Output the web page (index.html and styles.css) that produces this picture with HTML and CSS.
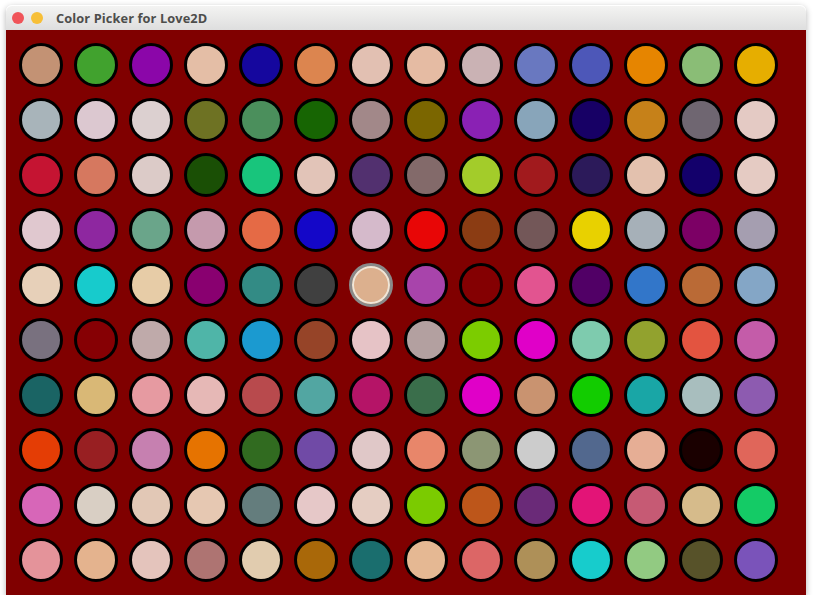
FILE: index.html
```html
<!DOCTYPE html>
<html>
<head>
<meta charset="utf-8">
<title>Color Picker for Love2D</title>
<link rel="stylesheet" href="styles.css">
</head>
<body>
<div class="window">
  <div class="titlebar">
    <span class="btn close"></span>
    <span class="btn min"></span>
    <span class="title">Color Picker for Love2D</span>
  </div>
  <div class="canvas">
    <div class="dot" style="background:#c39274"></div>
    <div class="dot" style="background:#41a22e"></div>
    <div class="dot" style="background:#8b06a9"></div>
    <div class="dot" style="background:#e4bea6"></div>
    <div class="dot" style="background:#15079e"></div>
    <div class="dot" style="background:#dc854f"></div>
    <div class="dot" style="background:#e2c0b2"></div>
    <div class="dot" style="background:#e5bba3"></div>
    <div class="dot" style="background:#cab2b4"></div>
    <div class="dot" style="background:#6978c0"></div>
    <div class="dot" style="background:#4d57b8"></div>
    <div class="dot" style="background:#e68500"></div>
    <div class="dot" style="background:#8abd76"></div>
    <div class="dot" style="background:#e6ae00"></div>

    <div class="dot" style="background:#a8b4ba"></div>
    <div class="dot" style="background:#dcc8d0"></div>
    <div class="dot" style="background:#dcd0d0"></div>
    <div class="dot" style="background:#6e7223"></div>
    <div class="dot" style="background:#4b8f5c"></div>
    <div class="dot" style="background:#176503"></div>
    <div class="dot" style="background:#a28889"></div>
    <div class="dot" style="background:#7b6600"></div>
    <div class="dot" style="background:#8a21b4"></div>
    <div class="dot" style="background:#88a5ba"></div>
    <div class="dot" style="background:#170065"></div>
    <div class="dot" style="background:#c68119"></div>
    <div class="dot" style="background:#6f6671"></div>
    <div class="dot" style="background:#e4cac4"></div>

    <div class="dot" style="background:#c51432"></div>
    <div class="dot" style="background:#d6785f"></div>
    <div class="dot" style="background:#dccbc8"></div>
    <div class="dot" style="background:#1a4f05"></div>
    <div class="dot" style="background:#18c57c"></div>
    <div class="dot" style="background:#e2c4b8"></div>
    <div class="dot" style="background:#52306f"></div>
    <div class="dot" style="background:#836a6a"></div>
    <div class="dot" style="background:#a3cc2a"></div>
    <div class="dot" style="background:#a11a1d"></div>
    <div class="dot" style="background:#2c1a5a"></div>
    <div class="dot" style="background:#e3c1ae"></div>
    <div class="dot" style="background:#13006b"></div>
    <div class="dot" style="background:#e5cbc3"></div>

    <div class="dot" style="background:#e0c8cf"></div>
    <div class="dot" style="background:#8e27a0"></div>
    <div class="dot" style="background:#6aa58a"></div>
    <div class="dot" style="background:#c59aad"></div>
    <div class="dot" style="background:#e56a45"></div>
    <div class="dot" style="background:#1407c8"></div>
    <div class="dot" style="background:#d5bacb"></div>
    <div class="dot" style="background:#e80606"></div>
    <div class="dot" style="background:#8b3c13"></div>
    <div class="dot" style="background:#735758"></div>
    <div class="dot" style="background:#e8d100"></div>
    <div class="dot" style="background:#a6b0b8"></div>
    <div class="dot" style="background:#7c0065"></div>
    <div class="dot" style="background:#a59eb0"></div>

    <div class="dot" style="background:#e7d0b9"></div>
    <div class="dot" style="background:#17cbcc"></div>
    <div class="dot" style="background:#e7cca7"></div>
    <div class="dot" style="background:#890070"></div>
    <div class="dot" style="background:#338b85"></div>
    <div class="dot" style="background:#404040"></div>
    <div class="dot selected" style="background:#dcb08e"></div>
    <div class="dot" style="background:#a844ab"></div>
    <div class="dot" style="background:#840002"></div>
    <div class="dot" style="background:#e25490"></div>
    <div class="dot" style="background:#510066"></div>
    <div class="dot" style="background:#3276c9"></div>
    <div class="dot" style="background:#ba6a36"></div>
    <div class="dot" style="background:#84a6c6"></div>

    <div class="dot" style="background:#79717f"></div>
    <div class="dot" style="background:#860004"></div>
    <div class="dot" style="background:#bfaaaa"></div>
    <div class="dot" style="background:#4fb5a8"></div>
    <div class="dot" style="background:#1b9ad0"></div>
    <div class="dot" style="background:#964428"></div>
    <div class="dot" style="background:#e6c3c6"></div>
    <div class="dot" style="background:#b3a0a0"></div>
    <div class="dot" style="background:#7ccc00"></div>
    <div class="dot" style="background:#e000c8"></div>
    <div class="dot" style="background:#7ecbae"></div>
    <div class="dot" style="background:#92a22e"></div>
    <div class="dot" style="background:#e35440"></div>
    <div class="dot" style="background:#c45ca9"></div>

    <div class="dot" style="background:#1a6464"></div>
    <div class="dot" style="background:#d9b876"></div>
    <div class="dot" style="background:#e69aa1"></div>
    <div class="dot" style="background:#e6b8b6"></div>
    <div class="dot" style="background:#b84a4d"></div>
    <div class="dot" style="background:#52a6a2"></div>
    <div class="dot" style="background:#b51467"></div>
    <div class="dot" style="background:#3a6e4b"></div>
    <div class="dot" style="background:#e000c8"></div>
    <div class="dot" style="background:#c99370"></div>
    <div class="dot" style="background:#12cc00"></div>
    <div class="dot" style="background:#19a6a6"></div>
    <div class="dot" style="background:#a8bebe"></div>
    <div class="dot" style="background:#8d5bb0"></div>

    <div class="dot" style="background:#e43d05"></div>
    <div class="dot" style="background:#981f22"></div>
    <div class="dot" style="background:#c680b0"></div>
    <div class="dot" style="background:#e67300"></div>
    <div class="dot" style="background:#316b20"></div>
    <div class="dot" style="background:#704aa6"></div>
    <div class="dot" style="background:#e0c8c8"></div>
    <div class="dot" style="background:#e8866a"></div>
    <div class="dot" style="background:#8c9674"></div>
    <div class="dot" style="background:#cccccc"></div>
    <div class="dot" style="background:#52688e"></div>
    <div class="dot" style="background:#e6ae95"></div>
    <div class="dot" style="background:#1a0000"></div>
    <div class="dot" style="background:#e0665a"></div>

    <div class="dot" style="background:#d766b8"></div>
    <div class="dot" style="background:#d9cfc4"></div>
    <div class="dot" style="background:#e2c8b6"></div>
    <div class="dot" style="background:#e6c8b2"></div>
    <div class="dot" style="background:#647d7d"></div>
    <div class="dot" style="background:#e6c8c8"></div>
    <div class="dot" style="background:#e5cdc2"></div>
    <div class="dot" style="background:#7bcb00"></div>
    <div class="dot" style="background:#bd561a"></div>
    <div class="dot" style="background:#6a2a78"></div>
    <div class="dot" style="background:#e31477"></div>
    <div class="dot" style="background:#c65a74"></div>
    <div class="dot" style="background:#d6bb8b"></div>
    <div class="dot" style="background:#14cb66"></div>

    <div class="dot" style="background:#e4939a"></div>
    <div class="dot" style="background:#e4b38e"></div>
    <div class="dot" style="background:#e4c4bc"></div>
    <div class="dot" style="background:#ae7472"></div>
    <div class="dot" style="background:#e1ccaf"></div>
    <div class="dot" style="background:#a96809"></div>
    <div class="dot" style="background:#1a6e6e"></div>
    <div class="dot" style="background:#e5b893"></div>
    <div class="dot" style="background:#dc6666"></div>
    <div class="dot" style="background:#ae9058"></div>
    <div class="dot" style="background:#17cccc"></div>
    <div class="dot" style="background:#92ca82"></div>
    <div class="dot" style="background:#575229"></div>
    <div class="dot" style="background:#7a53ba"></div>
  </div>
</div>
</body>
</html>
```

FILE: styles.css
```css
html, body {
  margin: 0;
  padding: 0;
  background: #ffffff;
}

.window {
  width: 800px;
  margin: 5px 0 0 6px;
  border-radius: 6px 6px 0 0;
  box-shadow: 0 2px 6px rgba(0, 0, 0, 0.3);
}

.titlebar {
  height: 25px;
  display: flex;
  align-items: center;
  padding-left: 6px;
  border-radius: 6px 6px 0 0;
  background: linear-gradient(#f4f4f3, #dedede);
  box-shadow: inset 0 1px 0 #ffffff;
}

.btn {
  width: 12px;
  height: 12px;
  border-radius: 50%;
  margin-right: 7px;
  flex: none;
}

.close {
  background: #f05459;
}

.min {
  background: #f7bf37;
}

.title {
  margin-left: 6px;
  font-family: "Open Sans", "DejaVu Sans", sans-serif;
  font-weight: 700;
  font-size: 12.8px;
  color: #4d4d4b;
  letter-spacing: 0.1px;
}

.canvas {
  height: 565px;
  box-sizing: border-box;
  background: #800000;
  padding: 13px;
  display: grid;
  grid-template-columns: repeat(14, 44px);
  grid-auto-rows: 44px;
  column-gap: 11px;
  row-gap: 11px;
}

.dot {
  width: 44px;
  height: 44px;
  box-sizing: border-box;
  border-radius: 50%;
  border: 3px solid #000000;
}

.dot.selected {
  border-color: #8a8a8a;
  box-shadow: inset 0 0 0 2px #efe6d8;
}
```
